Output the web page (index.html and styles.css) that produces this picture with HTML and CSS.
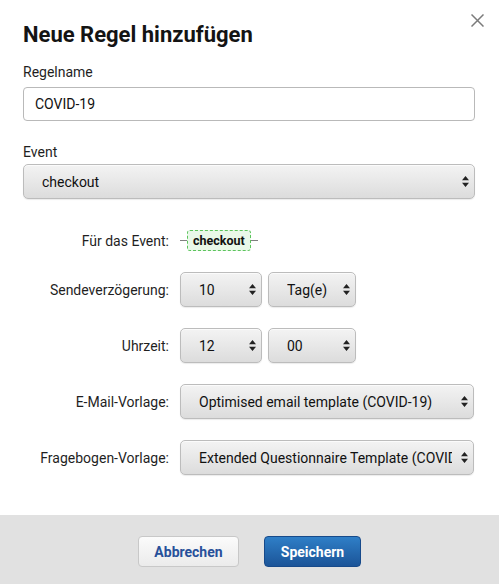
FILE: index.html
```html
<!DOCTYPE html>
<html lang="de">
<head>
<meta charset="utf-8">
<title>Neue Regel hinzufügen</title>
<link rel="stylesheet" href="styles.css">
</head>
<body>
<div class="dialog">
  <div class="header">
    <h1 class="title">Neue Regel hinzufügen</h1>
    <button class="close" aria-label="Schließen">
      <svg width="13" height="13" viewBox="0 0 13 13"><path d="M0.5 0.5 L12.5 12.5 M12.5 0.5 L0.5 12.5" stroke="#7b7b7b" stroke-width="1.5" fill="none"/></svg>
    </button>
  </div>
  <div class="body">
    <label class="field-label">Regelname</label>
    <input class="text-input" type="text" value="COVID-19">

    <label class="field-label event-label">Event</label>
    <div class="select-wrap full">
      <select class="select"><option>checkout</option></select>
      <svg class="arrows" width="7" height="11" viewBox="0 0 7 11"><path d="M3.5 0 L7 4.3 L0 4.3 Z M3.5 11 L7 6.7 L0 6.7 Z" fill="#222"/></svg>
    </div>

    <div class="rows">
      <div class="row-label">Für das Event:</div>
      <div class="row-value">
        <span class="line"></span><span class="badge">checkout</span><span class="line"></span>
      </div>

      <div class="row-label">Sendeverzögerung:</div>
      <div class="row-value pair">
        <div class="select-wrap w82">
          <select class="select"><option>10</option></select>
          <svg class="arrows" width="7" height="11" viewBox="0 0 7 11"><path d="M3.5 0 L7 4.3 L0 4.3 Z M3.5 11 L7 6.7 L0 6.7 Z" fill="#222"/></svg>
        </div>
        <div class="select-wrap w88">
          <select class="select"><option>Tag(e)</option></select>
          <svg class="arrows" width="7" height="11" viewBox="0 0 7 11"><path d="M3.5 0 L7 4.3 L0 4.3 Z M3.5 11 L7 6.7 L0 6.7 Z" fill="#222"/></svg>
        </div>
      </div>

      <div class="row-label">Uhrzeit:</div>
      <div class="row-value pair">
        <div class="select-wrap w82">
          <select class="select"><option>12</option></select>
          <svg class="arrows" width="7" height="11" viewBox="0 0 7 11"><path d="M3.5 0 L7 4.3 L0 4.3 Z M3.5 11 L7 6.7 L0 6.7 Z" fill="#222"/></svg>
        </div>
        <div class="select-wrap w88">
          <select class="select"><option>00</option></select>
          <svg class="arrows" width="7" height="11" viewBox="0 0 7 11"><path d="M3.5 0 L7 4.3 L0 4.3 Z M3.5 11 L7 6.7 L0 6.7 Z" fill="#222"/></svg>
        </div>
      </div>

      <div class="row-label">E-Mail-Vorlage:</div>
      <div class="row-value">
        <div class="select-wrap w294">
          <select class="select"><option>Optimised email template (COVID-19)</option></select>
          <svg class="arrows" width="7" height="11" viewBox="0 0 7 11"><path d="M3.5 0 L7 4.3 L0 4.3 Z M3.5 11 L7 6.7 L0 6.7 Z" fill="#222"/></svg>
        </div>
      </div>

      <div class="row-label">Fragebogen-Vorlage:</div>
      <div class="row-value">
        <div class="select-wrap w294">
          <select class="select"><option>Extended Questionnaire Template (COVID-19)</option></select>
          <svg class="arrows" width="7" height="11" viewBox="0 0 7 11"><path d="M3.5 0 L7 4.3 L0 4.3 Z M3.5 11 L7 6.7 L0 6.7 Z" fill="#222"/></svg>
        </div>
      </div>
    </div>
  </div>
  <div class="footer">
    <button class="btn btn-cancel">Abbrechen</button>
    <button class="btn btn-save">Speichern</button>
  </div>
</div>
</body>
</html>
```

FILE: styles.css
```css
html, body {
  margin: 0;
  padding: 0;
  background: #ffffff;
}
body {
  font-family: Roboto, "Liberation Sans", Arial, sans-serif;
  color: #1a1a1a;
  width: 499px;
  height: 584px;
  overflow: hidden;
}
.dialog {
  display: flex;
  flex-direction: column;
  height: 584px;
}
.header {
  display: flex;
  justify-content: space-between;
  align-items: flex-start;
  padding: 14px 15px 0 23px;
}
.title {
  margin: 7px 0 0;
  font-size: 22px;
  line-height: 28px;
  font-weight: 700;
  color: #141414;
}
.close {
  border: 0;
  background: none;
  padding: 0;
  width: 13px;
  height: 13px;
  display: block;
  cursor: pointer;
}
.close svg {
  display: block;
}
.body {
  flex: 1;
  padding: 0 24px 0 23px;
}
.field-label {
  display: block;
  margin-top: 13px;
  margin-bottom: 5px;
  font-size: 14px;
  line-height: 20px;
  color: #1f1f1f;
}
.event-label {
  margin-top: 21px;
  margin-bottom: 2px;
}
.text-input {
  box-sizing: border-box;
  display: block;
  width: 452px;
  height: 34px;
  margin: 0;
  padding: 0 11px;
  border: 1px solid #b9b9b9;
  border-radius: 4px;
  background: #fff;
  font-family: inherit;
  font-size: 14px;
  color: #111;
  outline: none;
}
.select-wrap {
  position: relative;
  height: 35px;
}
.select-wrap.full { width: 452px; }
.select-wrap.w82 { width: 82px; }
.select-wrap.w88 { width: 88px; }
.select-wrap.w294 { width: 294px; }
.select {
  -webkit-appearance: none;
  appearance: none;
  box-sizing: border-box;
  display: block;
  width: 100%;
  height: 35px;
  margin: 0;
  padding: 0 21px 0 18px;
  border: 1px solid #bcbcbc;
  border-radius: 5px;
  background: linear-gradient(#f3f3f3 0%, #e9e9e9 45%, #dcdcdc 100%);
  box-shadow: inset 0 1px 0 #fbfbfb, 0 1px 1px rgba(0,0,0,0.08);
  font-family: inherit;
  font-size: 14px;
  color: #111;
  outline: none;
}
.arrows {
  position: absolute;
  right: 6px;
  top: 12px;
  pointer-events: none;
}
.rows {
  display: grid;
  grid-template-columns: 146px auto;
  column-gap: 11px;
  row-gap: 21px;
  align-items: center;
  margin-top: 31px;
}
.row-label {
  text-align: right;
  font-size: 14px;
  line-height: 20px;
  color: #1f1f1f;
}
.row-value {
  display: flex;
  align-items: center;
}
.pair {
  gap: 6px;
}
.line {
  display: block;
  width: 7px;
  height: 1px;
  background: #808080;
}
.badge {
  box-sizing: border-box;
  height: 21px;
  line-height: 19px;
  padding: 0 5px;
  border: 1px dashed #5cc45c;
  border-radius: 3px;
  background: #e9f8e9;
  font-size: 12.5px;
  font-weight: 700;
  color: #111;
}
.footer {
  height: 69px;
  flex: none;
  background: #e1e1e1;
  display: flex;
  justify-content: center;
  align-items: flex-start;
  gap: 25px;
  padding-top: 21px;
  box-sizing: border-box;
}
.btn {
  box-sizing: border-box;
  height: 31px;
  border-radius: 4px;
  font-family: inherit;
  font-size: 14px;
  font-weight: 700;
  padding: 0;
  cursor: pointer;
}
.btn-cancel {
  width: 101px;
  border: 1px solid #c8c8c8;
  background: linear-gradient(#fbfbfb, #ebebeb);
  color: #27509a;
}
.btn-save {
  width: 97px;
  border: 1px solid #174a8a;
  background: linear-gradient(#2f7fc7, #1b5498);
  color: #ffffff;
}
```
